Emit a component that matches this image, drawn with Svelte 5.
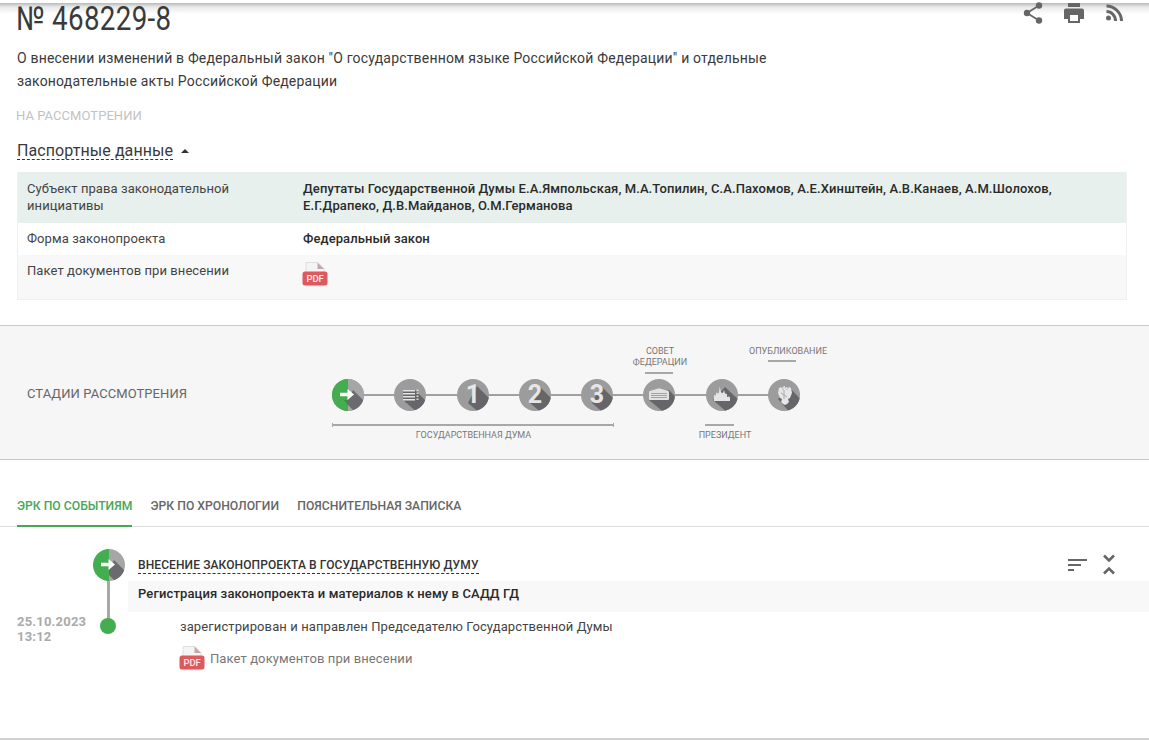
<script>
  const stages = [
    { kind: 'start' }, { kind: 'list' }, { kind: 'num', n: '1' }, { kind: 'num', n: '2' },
    { kind: 'num', n: '3' }, { kind: 'sf' }, { kind: 'pres' }, { kind: 'eagle' }
  ];
</script>

{#snippet pdf()}
  <svg class="pdf" width="26" height="25" viewBox="0 0 26 25" aria-hidden="true">
    <path d="M4 .5h12l6 6V23a1 1 0 0 1-1 1H5a1 1 0 0 1-1-1z" fill="#f4f4f4" stroke="#d9d9d9" stroke-width=".8"/>
    <path d="M15.500.5v6.500h6.500z" fill="#c9a5a5"/>
    <rect x="0.5" y="9.500" width="25" height="14" rx="2.500" fill="#dc5a5e"/>
    <text x="13" y="20" text-anchor="middle" class="pdft">PDF</text>
  </svg>
{/snippet}

{#snippet arrow()}
  <path d="M8 13.800h7.500v-3.800l6.500 5.500-6.500 5.500v-3.800H8z" fill="#fff"/>
{/snippet}

{#snippet stage(s, i)}
  <svg class="node" width="32" height="32" viewBox="0 0 32 32" aria-hidden="true">
    <defs><clipPath id={`c${i}`}><circle cx="16" cy="16" r="16"/></clipPath></defs>
    <g clip-path={`url(#c${i})`}>
      <rect width="32" height="32" fill="#9c9c9c"/>
      {#if s.kind === 'start'}
        <rect width="16" height="32" fill="#43ad4f"/>
        <rect x="16" width="16" height="32" fill="#a6a6a6"/>
        <path d="M16 21 L21 11 L34 24 L24 34 L16 26Z" fill="#6b6b6f"/>
        <path d="M12 21 L16 21 L16 26Z" fill="#388f42"/>
        {@render arrow()}
      {:else if s.kind === 'list'}
        <path d="M9 11 H21 L34 24 V34 H24 L9 21Z" fill="#66666a"/>
        <path d="M9 11h12v1.600H9zM9 14h12v1.600H9zM9 17h12v1.600H9zM9 20h12v1.600H9z" fill="#e4e4e4"/>
        <path d="M22.500 10.500h2v1.500h-2zM22.500 13.500h2v1.500h-2zM22.500 16.500h2v1.500h-2zM22.500 19.500h2v1.500h-2z" fill="#d8d8d8"/>
      {:else if s.kind === 'num'}
        <path d="M20 7 L36 23 L25 36 L11 24Z" fill="#66666a"/>
        <text x="16" y="23.500" text-anchor="middle" class="numt">{s.n}</text>
      {:else if s.kind === 'sf'}
        <path d="M6 21 L26 11 L36 22 L24 36Z" fill="#66666a"/>
        <path d="M7 12 L15 9.500h2l8 2.500a1 1 0 0 1 1 1v7a1 1 0 0 1-1 1H7a1 1 0 0 1-1-1v-7a1 1 0 0 1 1-1z" fill="#e2e2e2"/>
        <path d="M8 14.500h16M8 16.500h16M8 18.500h16" stroke="#9c9c9c" stroke-width=".9"/>
      {:else if s.kind === 'pres'}
        <path d="M7 21 L19 8 L36 24 L24 36Z" fill="#66666a"/>
        <path d="M8 22v-6l2 .5v-3l2 1 1-1 .7-6 1.300 6 2 .5 1-3 1 3.500 2 .5v3l2-.5 1 1v3.500z" fill="#e4e4e4"/>
      {:else}
        <path d="M10 20 L22 9 L36 24 L24 36Z" fill="#66666a"/>
        <path d="M15 7h2v2l2-1 1 1-2 2h1l2-3 2 1 1 5-2 5-2 1 1 3-2 2-2 1-2-1-2-2 1-3-2-1-2-5 1-5 2-1 2 3h1l-2-2 1-1 2 1z" fill="#e6e6e6"/>
        <path d="M16 11v9M13 14l6 4" stroke="#a8a8a8" stroke-width="1"/>
      {/if}
    </g>
  </svg>
{/snippet}

<div class="shade"></div>

<header class="head">
  <div class="titlerow">
    <h1><span>№ 468229-8</span></h1>
    <div class="tools">
      <svg width="22" height="24" viewBox="0 0 22 24" aria-hidden="true"><g fill="#666"><circle cx="17" cy="4.500" r="3.200"/><circle cx="5" cy="12" r="3.200"/><circle cx="17" cy="19.500" r="3.200"/></g><path d="M17 4.500 5 12l12 7.500" fill="none" stroke="#666" stroke-width="1.800"/></svg>
      <svg width="22" height="24" viewBox="0 0 22 24" aria-hidden="true"><path d="M5 2h12v4H5zM3 7.500h16a2 2 0 0 1 2 2V18h-4v4H5v-4H1V9.500a2 2 0 0 1 2-2z" fill="#666"/><rect x="7" y="14" width="8" height="6" fill="#fff"/></svg>
      <svg width="20" height="24" viewBox="0 0 20 24" aria-hidden="true"><circle cx="4.500" cy="17" r="2.500" fill="#666"/><path d="M2.500 10.500c5 0 9 4 9 9.500M2.500 5c8 0 15 7 15 15" fill="none" stroke="#666" stroke-width="3"/></svg>
    </div>
  </div>
  <p class="desc">О внесении изменений в Федеральный закон "О государственном языке Российской Федерации" и отдельные законодательные акты Российской Федерации</p>
  <div class="status">НА РАССМОТРЕНИИ</div>
  <div class="passport"><span>Паспортные данные</span><i class="caret"></i></div>
</header>

<section class="table">
  <div class="row green">
    <div class="k">Субъект права законодательной инициативы</div>
    <div class="v">Депутаты Государственной Думы Е.А.Ямпольская, М.А.Топилин, С.А.Пахомов, А.Е.Хинштейн, А.В.Канаев, А.М.Шолохов, Е.Г.Драпеко, Д.В.Майданов, О.М.Германова</div>
  </div>
  <div class="row white">
    <div class="k">Форма законопроекта</div>
    <div class="v">Федеральный закон</div>
  </div>
  <div class="row gray">
    <div class="k">Пакет документов при внесении</div>
    <div class="v">{@render pdf()}</div>
  </div>
</section>

<section class="stages">
  <div class="stitle">СТАДИИ РАССМОТРЕНИЯ</div>
  <div class="diagram">
    <div class="track"></div>
    <div class="nodes">
      {#each stages as s, i}{@render stage(s, i)}{/each}
    </div>
    <div class="lab sf">СОВЕТ<br>ФЕДЕРАЦИИ</div><div class="bar sfb"></div>
    <div class="lab pub">ОПУБЛИКОВАНИЕ</div><div class="bar pubb"></div>
    <div class="bar presb"></div><div class="lab pres">ПРЕЗИДЕНТ</div>
    <div class="bar gdb"></div><div class="lab gd">ГОСУДАРСТВЕННАЯ ДУМА</div>
  </div>
</section>

<nav class="tabs">
  <span class="tab active">ЭРК ПО СОБЫТИЯМ</span>
  <span class="tab">ЭРК ПО ХРОНОЛОГИИ</span>
  <span class="tab">ПОЯСНИТЕЛЬНАЯ ЗАПИСКА</span>
</nav>

<section class="events">
  <div class="date">25.10.2023<br>13:12</div>
  <div class="rail">
    <svg class="bignode" width="32" height="32" viewBox="0 0 32 32" aria-hidden="true">
      <defs><clipPath id="cb"><circle cx="16" cy="16" r="16"/></clipPath></defs>
      <g clip-path="url(#cb)">
        <rect width="16" height="32" fill="#43ad4f"/>
        <rect x="16" width="16" height="32" fill="#a6a6a6"/>
        <path d="M16 21 L21 11 L34 24 L24 34 L16 26Z" fill="#6b6b6f"/>
        {@render arrow()}
      </g>
    </svg>
    <div class="stem"></div>
    <div class="dot"></div>
  </div>
  <div class="main">
    <div class="evhead">
      <span class="evtitle">ВНЕСЕНИЕ ЗАКОНОПРОЕКТА В ГОСУДАРСТВЕННУЮ ДУМУ</span>
      <div class="evtools">
        <svg class="sort" width="20" height="14" viewBox="0 0 20 14" aria-hidden="true"><path d="M0 1h19v2H0zM0 6h13v2H0zM0 11h6v2H0z" fill="#666"/></svg>
        <svg width="14" height="22" viewBox="0 0 14 22" aria-hidden="true"><path d="M2 1.500l5 5 5-5M2 19.500l5-5 5 5" fill="none" stroke="#666" stroke-width="2.600"/></svg>
      </div>
    </div>
    <div class="evsub">Регистрация законопроекта и материалов к нему в САДД ГД</div>
    <div class="evbody">
      <div class="evtext">зарегистрирован и направлен Председателю Государственной Думы</div>
      <div class="evdoc">{@render pdf()}<span>Пакет документов при внесении</span></div>
    </div>
  </div>
</section>

<div class="endline"></div>

<style>
  :global(body) { margin: 0; background: #fff; font-family: Roboto, "Noto Sans", sans-serif; color: #333; overflow: hidden; }
  .shade { position: absolute; left: 0; right: 0; top: 3px; height: 11px; background: linear-gradient(#b9b9b9, #e8e8e8 35%, #fff); }
  .head { padding: 0 17px; position: relative; height: 172px; box-sizing: border-box; }
  .titlerow { display: flex; justify-content: space-between; height: 47px; }
  h1 { margin: 0 0 0 -1px; font-weight: 400; font-size: 33px; line-height: 37px; color: #3a3a3a; }
  h1 span { display: inline-block; transform: scaleX(.84); transform-origin: 0 0; white-space: nowrap; letter-spacing: .4px; }
  .tools { display: flex; gap: 19px; padding: 1px 8px 0 0; align-items: flex-start; }
  .desc { margin: 0; width: 800px; font-size: 14px; line-height: 23px; letter-spacing: .18px; color: #3a3a3a; }
  .status { margin: 14px 0 0 -1px; font-size: 13px; line-height: 18px; color: #c2c2c2; letter-spacing: .05px; }
  .passport { margin-top: 17px; font-size: 16px; line-height: 20px; display: flex; align-items: center; gap: 8px; color: #3a3a3a; }
  .passport span { border-bottom: 1px dashed #333; letter-spacing: .08px; line-height: 17px; }
  .caret { width: 0; height: 0; border: 4px solid transparent; border-top: 0; border-bottom-color: #333; }
  .table { margin: 0 22px 0 17px; border: 1px solid #f0f0f0; border-width: 0 1px 1px; }
  .row { display: flex; padding: 8px 9px; font-size: 13px; line-height: 17px; letter-spacing: .08px; }
  .green { background: #e7f0ec; height: 51px; box-sizing: border-box; }
  .white { background: #fff; height: 32px; box-sizing: border-box; padding-top: 7px; }
  .gray { background: #f8f8f8; height: 44px; box-sizing: border-box; padding-top: 7px; }
  .k { width: 277px; flex: none; color: #444; padding-right: 60px; box-sizing: border-box; }
  .v { font-weight: 500; color: #2a2a2a; flex: 1; letter-spacing: .1px; margin-left: -1px; }
  .pdf { display: block; flex: none; margin-left: -1px; }
  .pdft { font: 500 9.500px Roboto, sans-serif; fill: #fbeaea; letter-spacing: -.2px; }
  .numt { font: 700 25px Roboto, sans-serif; fill: #e6e6e6; }
  .stages { margin-top: 25px; height: 135px; box-sizing: border-box; background: #f6f6f6; border-top: 1px solid #c9c9c9; border-bottom: 1px solid #c9c9c9; display: flex; position: relative; }
  .stitle { position: absolute; left: 27px; top: 60px; font-size: 13px; line-height: 16px; color: #666; letter-spacing: .08px; }
  .diagram { position: absolute; left: 332px; top: 0; width: 500px; height: 133px; }
  .track { position: absolute; left: 16px; top: 68px; width: 436px; height: 2px; background: #a0a0a0; }
  .nodes { position: absolute; left: 0; top: 53px; display: flex; gap: 30.300px; }
  .node { display: block; flex: none; }
  .lab { position: absolute; font-size: 9px; line-height: 11px; text-align: center; color: #777; white-space: nowrap; transform: translateX(-50%); }
  .bar { position: absolute; height: 2px; background: #a8a8a8; }
  .sf { left: 328px; top: 20px; } .sfb { left: 313px; width: 28px; top: 46px; }
  .pub { left: 456px; top: 20px; } .pubb { left: 436px; width: 28px; top: 34px; }
  .presb { left: 373px; width: 29px; top: 98px; } .pres { left: 393px; top: 104px; }
  .gdb { left: 0; width: 282px; top: 98px; }
  .gdb::before, .gdb::after { content: ""; position: absolute; top: -1px; width: 1px; height: 4px; background: #a8a8a8; }
  .gdb::before { left: 0; } .gdb::after { right: 0; }
  .gd { left: 141.500px; top: 104px; }
  .tabs { height: 67px; box-sizing: border-box; border-bottom: 1px solid #ddd; padding: 0 17px; display: flex; gap: 18.200px; align-items: flex-end; }
  .tab { font-size: 12.200px; line-height: 16px; font-weight: 500; color: #666; padding-bottom: 12px; border-bottom: 2px solid transparent; margin-bottom: -1px; height: 15px; display: flex; align-items: flex-start; }
  .active { color: #46a755; border-bottom-color: #46a755; }
  .events { position: relative; display: flex; height: 212px; }
  .date { position: absolute; left: 17px; top: 87px; font-size: 13px; line-height: 15px; font-weight: 700; color: #aaa; letter-spacing: .2px; }
  .rail { position: absolute; left: 93px; top: 22px; width: 32px; height: 85px; }
  .bignode { display: block; position: relative; z-index: 1; }
  .stem { position: absolute; left: 14px; top: 28px; width: 3px; height: 50px; background: #a8a8a8; }
  .dot { position: absolute; left: 7px; top: 69px; width: 16px; height: 16px; border-radius: 50%; background: #43ad4f; }
  .main { margin-left: 128px; flex: 1; min-width: 0; }
  .evhead { display: flex; justify-content: space-between; padding: 31px 33px 0 10px; height: 54px; box-sizing: border-box; }
  .evtitle { font-size: 12px; font-weight: 500; line-height: 15px; height: 15px; border-bottom: 1px dashed #333; color: #333; letter-spacing: .1px; }
  .evtools { display: flex; gap: 14px; align-items: flex-start; margin-top: -4px; }
  .sort { margin-top: 4px; }
  .evsub { background: #f8f8f8; height: 31px; padding: 0 10px; font-size: 13px; line-height: 25px; font-weight: 500; color: #2a2a2a; letter-spacing: .11px; }
  .evbody { padding-left: 52px; font-size: 13px; color: #444; }
  .evtext { line-height: 17px; margin-top: 6px; letter-spacing: .1px; }
  .evdoc { display: flex; align-items: center; gap: 5px; margin-top: 11px; color: #777; letter-spacing: .1px; }
  .endline { position: absolute; left: 0; right: 0; top: 738px; height: 2px; background: #d0d0d0; }
</style>
